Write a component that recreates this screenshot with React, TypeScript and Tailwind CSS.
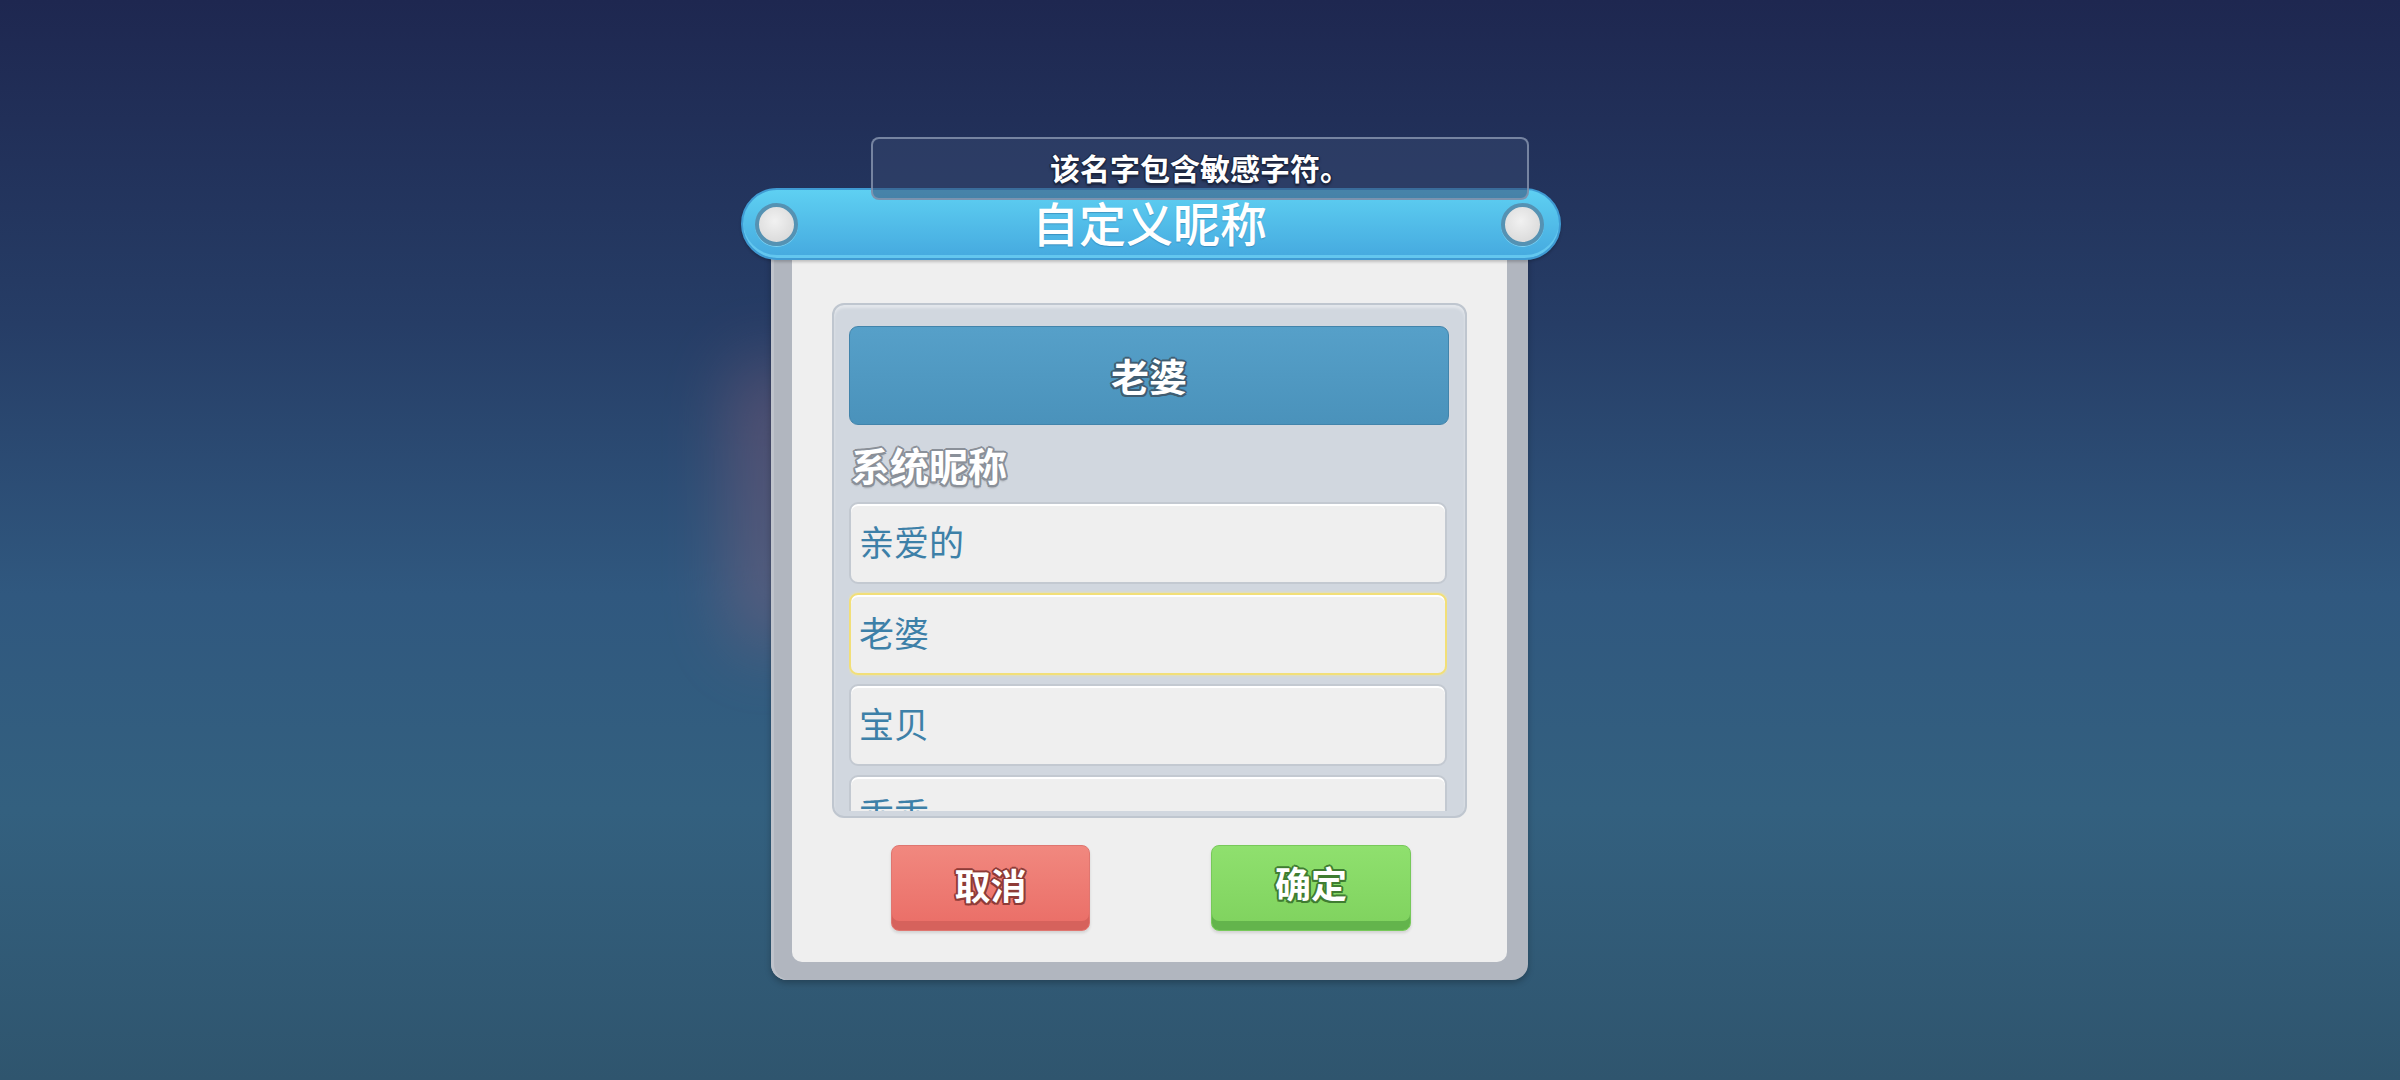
import React from "react";

const outlineGrey =
  "[text-shadow:2px_0_0_#8a9099,-2px_0_0_#8a9099,0_2px_0_#8a9099,0_-2px_0_#8a9099,1.5px_1.5px_0_#8a9099,-1.5px_1.5px_0_#8a9099,1.5px_-1.5px_0_#8a9099,-1.5px_-1.5px_0_#8a9099,0_3px_2px_rgba(0,0,0,0.25)]";
const outlineBlue =
  "[text-shadow:2px_0_0_#3f5d72,-2px_0_0_#3f5d72,0_2px_0_#3f5d72,0_-2px_0_#3f5d72,1.5px_1.5px_0_#3f5d72,-1.5px_1.5px_0_#3f5d72,1.5px_-1.5px_0_#3f5d72,-1.5px_-1.5px_0_#3f5d72]";
const outlineRed =
  "[text-shadow:2px_0_0_#8e3b37,-2px_0_0_#8e3b37,0_2px_0_#8e3b37,0_-2px_0_#8e3b37,1.5px_1.5px_0_#8e3b37,-1.5px_1.5px_0_#8e3b37,1.5px_-1.5px_0_#8e3b37,-1.5px_-1.5px_0_#8e3b37]";
const outlineGreen =
  "[text-shadow:2px_0_0_#3f7d31,-2px_0_0_#3f7d31,0_2px_0_#3f7d31,0_-2px_0_#3f7d31,1.5px_1.5px_0_#3f7d31,-1.5px_1.5px_0_#3f7d31,1.5px_-1.5px_0_#3f7d31,-1.5px_-1.5px_0_#3f7d31]";
const outlineDark =
  "[text-shadow:1.5px_0_0_#1d2742,-1.5px_0_0_#1d2742,0_1.5px_0_#1d2742,0_-1.5px_0_#1d2742,0_2px_3px_rgba(0,0,0,0.6)]";

const names = ["亲爱的", "老婆", "宝贝", "乖乖"];

function Knob() {
  return (
    <div className="h-[43px] w-[43px] shrink-0 rounded-full border-[4px] border-[#5592b3] bg-[radial-gradient(circle_at_45%_40%,#f1f1f1,#d4d4d4)] shadow-[0_1px_0_#7fd2f2]" />
  );
}

function TitleBar() {
  return (
    <div className="relative z-10 flex h-[72px] items-center rounded-full border-2 border-[#3f9bd3] bg-[linear-gradient(#5ed0f2,#45a9df)] pl-[12px] pr-[15px] shadow-[inset_0_-3px_0_#63c7ef,0_2px_3px_rgba(0,0,0,0.2)]">
      <Knob />
      <div className="flex-1 pb-[5px] text-center text-[47px] leading-none font-medium text-white [text-shadow:0_1px_1px_rgba(30,90,140,0.4)]">
        自定义昵称
      </div>
      <Knob />
    </div>
  );
}

function NameItem({ name, selected }: { name: string; selected: boolean }) {
  return (
    <div
      className={
        selected
          ? "flex h-[82px] shrink-0 items-center rounded-[9px] border-2 border-[#f2df78] bg-[#efefef] pb-[4px] pl-[8px] text-[35px] text-[#3d80a8] shadow-[0_0_3px_#f6e88e,inset_0_2px_0_#fff]"
          : "flex h-[82px] shrink-0 items-center rounded-[9px] border-2 border-[#c3c9d1] bg-[#efefef] pb-[4px] pl-[8px] text-[35px] text-[#3d80a8] shadow-[inset_0_2px_0_#fff]"
      }
    >
      {name}
    </div>
  );
}

function NameList() {
  return (
    <div className="flex h-[515px] flex-col rounded-[12px] border-2 border-[#bfc6cf] bg-[#d1d7df] pt-[21px] pr-[16px] pb-[5px] pl-[15px] shadow-[inset_0_3px_3px_rgba(255,255,255,0.4)]">
      <div
        className={`flex h-[99px] shrink-0 items-center justify-center rounded-[9px] border border-[#4284ab] bg-[linear-gradient(#56a0c9,#4a92bb)] pb-[2px] text-[38px] font-bold text-white ${outlineBlue}`}
      >
        老婆
      </div>
      <div
        className={`mt-[19px] h-[40px] shrink-0 pl-[2px] text-[39px] leading-[40px] font-bold text-white ${outlineGrey}`}
      >
        系统昵称
      </div>
      <div className="mt-[18px] mr-[2px] flex min-h-0 flex-1 flex-col gap-[9px] overflow-hidden">
        {names.map((n) => (
          <NameItem key={n} name={n} selected={n === "老婆"} />
        ))}
      </div>
    </div>
  );
}

function Buttons() {
  return (
    <div className="mt-[27px] flex pl-[59px] gap-[121px]">
      <button
        className={`flex h-[86px] w-[199px] items-center justify-center rounded-[8px] border border-[#df7670] bg-[linear-gradient(#f1887f,#ea6d66)] pb-[9px] text-[36px] font-bold text-white shadow-[inset_0_-9px_0_#d6625c,0_2px_3px_rgba(0,0,0,0.12)] ${outlineRed}`}
      >
        取消
      </button>
      <button
        className={`flex h-[86px] w-[200px] items-center justify-center rounded-[8px] border border-[#77c95a] bg-[linear-gradient(#8fe06e,#7fd25e)] pb-[12px] text-[36px] font-bold text-white shadow-[inset_0_-9px_0_#63b44c,0_2px_3px_rgba(0,0,0,0.12)] ${outlineGreen}`}
      >
        确定
      </button>
    </div>
  );
}

export default function App() {
  return (
    <div className="relative h-[1080px] w-full overflow-hidden bg-[linear-gradient(180deg,#1e2750_0%,#263d66_30%,#30587f_55%,#33607f_75%,#2f556e_100%)] font-['Noto_Sans_CJK_SC','Noto_Sans',sans-serif]">
      <div className="absolute top-[360px] left-[735px] h-[290px] w-[70px] rounded-full bg-[#b56a7c] opacity-35 blur-[35px]" />
      <div className="relative flex justify-center pt-[188px]">
        <div className="mr-[98px] flex w-[820px] flex-col">
          <TitleBar />
          <div className="-mt-[12px] ml-[30px] w-[757px] rounded-b-[16px] bg-[#b1b6bf] px-[21px] pt-[12px] pb-[18px] shadow-[inset_3px_0_0_#bfc3cb,0_3px_6px_rgba(0,0,0,0.25)]">
            <div className="rounded-b-[10px] bg-[#efefef] px-[40px] pt-[43px] pb-[31px]">
              <NameList />
              <Buttons />
            </div>
          </div>
        </div>
      </div>
      <div
        className={`absolute top-[137px] left-1/2 z-20 flex h-[63px] w-[658px] -translate-x-1/2 items-center justify-center rounded-[8px] border-2 border-[#8a97b0]/80 bg-[#34466d]/55 pb-[2px] text-[30px] font-bold text-white ${outlineDark}`}
      >
        该名字包含敏感字符。
      </div>
    </div>
  );
}
